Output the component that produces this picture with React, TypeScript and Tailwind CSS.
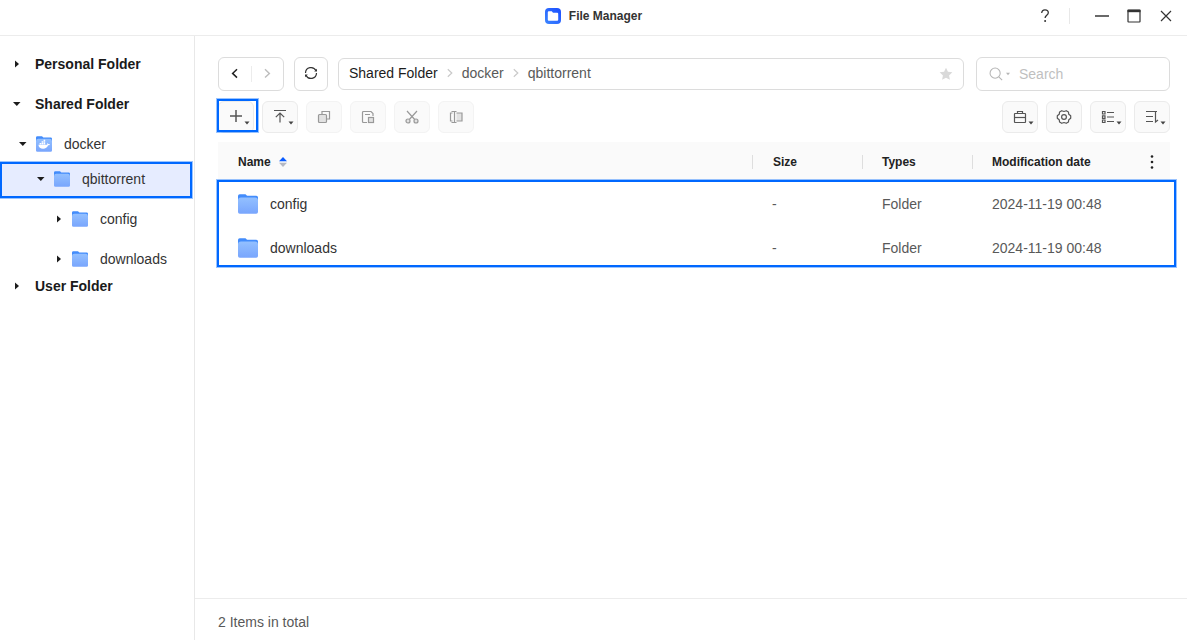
import type { ReactNode } from "react";

type TreeItem = {
  label: string;
  indent: string;
  open?: boolean;
  icon?: "docker" | "folder";
  row?: string;
};

const tree: TreeItem[] = [
  { label: "Personal Folder", indent: "pl-3", row: "h-10" },
  { label: "Shared Folder", indent: "pl-3", row: "h-10", open: true },
  { label: "docker", indent: "pl-[18px]", row: "h-10", open: true, icon: "docker" },
  {
    label: "qbittorrent",
    indent: "pl-[34px]",
    row: "h-9 -mt-0.5 mb-px mr-0.5 pb-0.5 bg-[#e6ecff] border-2 border-[#0068ff] ring-1 ring-[#0068ff]/40",
    open: true,
    icon: "folder",
  },
  { label: "config", indent: "pl-[54px]", row: "h-10", icon: "folder" },
  { label: "downloads", indent: "pl-[54px]", row: "h-10", icon: "folder" },
  { label: "User Folder", indent: "pl-3", row: "h-3.5" },
];

const files = [
  { name: "config", size: "-", type: "Folder", date: "2024-11-19 00:48" },
  { name: "downloads", size: "-", type: "Folder", date: "2024-11-19 00:48" },
];

function FolderIcon({ className, docker }: { className: string; docker?: boolean }) {
  return (
    <svg viewBox="0 0 20 20" className={className} aria-hidden="true">
      <defs>
        <linearGradient id="folder-front" x1="0" y1="0" x2="0" y2="1">
          <stop offset="0" stopColor="#93c0ff" />
          <stop offset="1" stopColor="#78a5fd" />
        </linearGradient>
      </defs>
      <path d="M0 2A1.700 1.700 0 0 1 1.700.3h5.600c.8 0 1.200 1.500 2 1.500h9A1.700 1.700 0 0 1 20 3.500V10H0z" fill="#438cfb" />
      <path d="M0 6.500a3 3 0 0 1 3-3h14a3 3 0 0 1 3 3V18a1.800 1.800 0 0 1-1.800 1.800H1.800A1.800 1.800 0 0 1 0 18z" fill="url(#folder-front)" />
      {docker && (
        <g fill="#fff">
          <path d="M3 11h10.800c.6-.8.4-1.800 0-2.400.9.100 1.500.7 1.600 1.500.7-.2 1.500 0 2 .4-.5.800-1.300 1.200-2.300 1.200-1 2.800-3.200 4.300-6.200 4.300C5.500 16 3.300 14.400 3 11z" />
          <path d="M4.500 8.800h2v1.700h-2zM7 8.800h2v1.700H7zM9.500 8.800h2v1.700h-2zM7 6.700h2v1.600H7zM9.500 6.700h2v1.600h-2zM9.500 4.800h2v1.400h-2z" />
        </g>
      )}
    </svg>
  );
}

function Caret({ open }: { open?: boolean }) {
  return (
    <svg viewBox="0 0 10 10" className="w-2.5 h-2.5 shrink-0" fill="#1c1c1c" aria-hidden="true">
      {open ? <path d="M1 3h7.500L4.800 7z" /> : <path d="M3 1.500v7l4-3.500z" />}
    </svg>
  );
}

function Icon({ children, className = "w-4 h-4" }: { children: ReactNode; className?: string }) {
  return (
    <svg viewBox="0 0 16 16" className={className} fill="none" stroke="currentColor" aria-hidden="true">
      {children}
    </svg>
  );
}

function ToolButton({
  label,
  children,
  menu,
  disabled,
  marked,
}: {
  label: string;
  children: ReactNode;
  menu?: boolean;
  disabled?: boolean;
  marked?: boolean;
}) {
  return (
    <button
      type="button"
      aria-label={label}
      disabled={disabled}
      className={`relative flex items-center justify-center w-9 h-8 rounded-md border bg-[#fafafa] ${
        disabled ? "border-[#f3f3f3] text-[#999]" : "border-[#ebebeb] text-[#555]"
      }`}
    >
      {children}
      {menu && (
        <svg viewBox="0 0 6 4" className="absolute right-[3px] bottom-[7px] w-1.5 h-1" fill="#444" aria-hidden="true">
          <path d="M.5.5h5L3 3.500z" />
        </svg>
      )}
      {marked && (
        <span className="absolute -left-0.5 -right-[5px] -top-[3px] bottom-0 border-2 border-[#0068ff] ring-1 ring-[#0068ff]/40" />
      )}
    </button>
  );
}

function Crumb() {
  return (
    <svg viewBox="0 0 6 10" className="w-1.5 h-2.5 mx-[9px]" fill="none" stroke="#c9c9c9" aria-hidden="true">
      <path d="M.8 1.300L4.800 5l-4 3.700" strokeWidth="1.200" />
    </svg>
  );
}

export default function App() {
  return (
    <div className="flex flex-col min-h-screen bg-white text-sm text-[#333] font-['Liberation_Sans',Arial,sans-serif]">
      <header className="relative flex items-center justify-center h-9 pb-1 border-b border-[#ececec]">
        <svg viewBox="0 0 16 16" className="w-4 h-4 mr-2" aria-hidden="true">
          <defs>
            <linearGradient id="app-logo" x1="1" y1="0" x2="0" y2="1">
              <stop offset="0" stopColor="#1b4dff" />
              <stop offset="1" stopColor="#3c86ff" />
            </linearGradient>
          </defs>
          <rect width="16" height="16" rx="4" fill="url(#app-logo)" />
          <path d="M2.800 4.300a1 1 0 0 1 1-1h3L8 4.800h4.200a1 1 0 0 1 1 1v6a1 1 0 0 1-1 1H3.800a1 1 0 0 1-1-1z" fill="#fff" />
        </svg>
        <h1 className="text-xs font-bold text-[#333]">File Manager</h1>
        <div className="absolute right-[5px] top-0 flex items-center h-8 text-[#333]">
          <button type="button" aria-label="Help" className="flex items-center justify-center w-8 h-8">
            <Icon>
              <path d="M4.700 5c.1-2 1.400-3.200 3.300-3.200S11.300 3 11.300 4.800c0 2.400-3.200 2.600-3.200 5.200" strokeWidth="1.300" />
              <circle cx="8.100" cy="13" r="1" fill="currentColor" stroke="none" />
            </Icon>
          </button>
          <span className="w-px h-4 ml-2 mr-4 bg-[#e8e8e8]" />
          <button type="button" aria-label="Minimize" className="flex items-center justify-center w-8 h-8">
            <Icon>
              <path d="M1 8h14" strokeWidth="1.600" stroke="#444" />
            </Icon>
          </button>
          <button type="button" aria-label="Maximize" className="flex items-center justify-center w-8 h-8">
            <Icon>
              <rect x="2" y="2" width="12" height="12" rx=".5" strokeWidth="1.200" />
              <path d="M1.500 3h13" strokeWidth="2.400" />
            </Icon>
          </button>
          <button type="button" aria-label="Close" className="flex items-center justify-center w-8 h-8">
            <Icon>
              <path d="M3 3l10 10M13 3L3 13" strokeWidth="1.200" />
            </Icon>
          </button>
        </div>
      </header>

      <div className="flex flex-1">
        <nav className="w-[195px] shrink-0 pt-2 border-r border-[#e8e8e8]">
          {tree.map((item) => (
            <div key={item.label} className={`flex items-center ${item.row} ${item.indent}`}>
              <button
                type="button"
                className={`flex items-center ${item.icon ? "gap-2" : "gap-[13px] font-bold text-[#1a1a1a]"}`}
              >
                <Caret open={item.open} />
                {item.icon && <FolderIcon className="w-4 h-4 mr-1" docker={item.icon === "docker"} />}
                {item.label}
              </button>
            </div>
          ))}
        </nav>

        <div className="flex flex-col flex-1 min-w-0">
          <main className="flex-1 pt-[21px] pl-[23px] pr-[17px]">
            {/* Navigation */}
            <div className="flex items-center">
              <div className="flex items-center w-[66px] h-[34px] mr-2.5 rounded-md border border-[#dcdcdc]">
                <button type="button" aria-label="Back" className="flex flex-1 items-center justify-center h-full">
                  <Icon>
                    <path d="M10 3.200L5.600 7.400l4.400 4.200" strokeWidth="1.500" stroke="#222" />
                  </Icon>
                </button>
                <span className="w-px h-4 bg-[#ececec]" />
                <button type="button" aria-label="Forward" className="flex flex-1 items-center justify-center h-full">
                  <Icon>
                    <path d="M6 3.200l4.400 4.200L6 11.600" strokeWidth="1.400" stroke="#bdbdbd" />
                  </Icon>
                </button>
              </div>
              <button
                type="button"
                aria-label="Refresh"
                className="flex items-center justify-center w-[34px] h-[34px] mr-2.5 pb-0.5 rounded-md border border-[#dcdcdc] text-[#333]"
              >
                <Icon>
                  <path d="M2.500 8A5.500 5.500 0 0 1 13 5.800M13.500 8A5.500 5.500 0 0 1 3 10.200" strokeWidth="1.200" />
                  <path d="M11.200 6.500h2.800V3.800zM4.800 9.500H2v2.700z" fill="currentColor" stroke="none" />
                </Icon>
              </button>
              <div className="flex flex-1 items-center h-8 px-2.5 pb-0.5 mr-3 rounded-md border border-[#dcdcdc]">
                <a href="#shared" className="text-[#1c1c1c]">Shared Folder</a>
                <Crumb />
                <a href="#docker" className="text-[#595959]">docker</a>
                <Crumb />
                <a href="#qbittorrent" className="text-[#595959]">qbittorrent</a>
                <button type="button" aria-label="Favorite" className="ml-auto pt-0.5">
                  <svg viewBox="0 0 16 16" className="block w-3.5 h-3.5" fill="#d9d9d9" aria-hidden="true">
                    <path d="M8 .8l2.200 4.700 5.100.6-3.800 3.500 1 5.100L8 12.200l-4.500 2.500 1-5.100L.7 6.100l5.100-.6z" />
                  </svg>
                </button>
              </div>
              <div className="flex items-center w-[194px] h-[34px] px-3 rounded-md border border-[#dcdcdc] text-[#b5b5b5]">
                <Icon className="w-3.5 h-3.5 shrink-0">
                  <circle cx="7" cy="7" r="5.800" strokeWidth="1.200" />
                  <path d="M11.200 11.200L15 15" strokeWidth="1.200" />
                </Icon>
                <svg viewBox="0 0 6 4" className="w-1.5 h-1 shrink-0 mx-0.5" fill="#b5b5b5" aria-hidden="true">
                  <path d="M1 .8h4L3 3.200z" />
                </svg>
                <input
                  type="text"
                  aria-label="Search"
                  placeholder="Search"
                  className="w-full min-w-0 pl-1.5 text-[#333] placeholder:text-[#bfbfbf] outline-none"
                />
              </div>
            </div>

            {/* Toolbar */}
            <div className="flex gap-2 mt-2.5">
              <ToolButton label="New" menu marked>
                <Icon>
                  <path d="M2 7h12M8 1v12" strokeWidth="1.500" />
                </Icon>
              </ToolButton>
              <ToolButton label="Upload" menu>
                <Icon>
                  <path d="M2 1.500h12M8 13.500V4M3.800 8.200L8 4l4.200 4.200" strokeWidth="1.200" />
                </Icon>
              </ToolButton>
              <ToolButton label="Copy" disabled>
                <Icon>
                  <path d="M6 5V2.500h7.500v7.500H11" strokeWidth="1.200" />
                  <rect x="2.500" y="5.500" width="8" height="8" rx="1" fill="#e2e2e2" strokeWidth="1.200" />
                </Icon>
              </ToolButton>
              <ToolButton label="Paste" disabled>
                <Icon>
                  <path d="M7 13.500H3.500a1 1 0 0 1-1-1v-9a1 1 0 0 1 1-1h7.500l2 2v2.500M5 5.500h5" strokeWidth="1.200" />
                  <rect x="8.500" y="8.500" width="5" height="5" fill="#e2e2e2" strokeWidth="1.200" />
                </Icon>
              </ToolButton>
              <ToolButton label="Cut" disabled>
                <Icon>
                  <path d="M3 2l7.700 8.500M13 2l-7.700 8.500" strokeWidth="1.200" />
                  <circle cx="4" cy="12" r="2" fill="#e2e2e2" strokeWidth="1.200" />
                  <circle cx="12" cy="12" r="2" fill="#e2e2e2" strokeWidth="1.200" />
                </Icon>
              </ToolButton>
              <ToolButton label="Rename" disabled>
                <Icon>
                  <path d="M8.500 4h5.500v8H8.500" fill="#e2e2e2" strokeWidth="1.200" />
                  <path d="M4.500 4h-2v8h2M6.500 2.500v11M3.500 2.500h5M3.500 13.500h5" strokeWidth="1.200" />
                </Icon>
              </ToolButton>
              <div className="flex gap-2 ml-auto">
                <ToolButton label="Tools" menu>
                  <Icon>
                    <path d="M5.500 4.500v-2h5v2" strokeWidth="1.200" />
                    <rect x="2.500" y="4.500" width="11" height="9" rx=".5" strokeWidth="1.200" />
                    <path d="M2.500 8.500h11" strokeWidth="1.200" />
                  </Icon>
                </ToolButton>
                <ToolButton label="Settings">
                  <Icon>
                    <path
                      d="M14.700 6.800v2.400l-1.900 1.500-.4 2.400-2.100 1.200L8 13.500l-2.300.8-2.100-1.200-.4-2.400-1.900-1.500V6.800l1.900-1.500.4-2.400 2.100-1.200L8 2.500l2.300-.8 2.100 1.200.4 2.400z"
                      strokeLinejoin="round"
                      strokeWidth="1.200"
                    />
                    <circle cx="8" cy="8" r="2.400" strokeWidth="1.200" />
                  </Icon>
                </ToolButton>
                <ToolButton label="View" menu>
                  <Icon>
                    <path d="M2.500 2.500H5V5H2.500zM2.500 6.800H5v2.500H2.500zM2.500 11H5v2.500H2.500zM7 3.500h7M7 8h7M7 12.500h7" strokeWidth="1.200" />
                  </Icon>
                </ToolButton>
                <ToolButton label="Sort" menu>
                  <Icon>
                    <path d="M2 2.500h11M2 7.500h7M2 12.500h7M11.500 2.500V13l2.500-2" strokeWidth="1.200" />
                  </Icon>
                </ToolButton>
              </div>
            </div>

            {/* File list */}
            <div className="relative mt-[9px]">
              <table className="w-full table-fixed text-left text-[#595959]">
                <colgroup>
                  <col />
                  <col className="w-[110px]" />
                  <col className="w-[110px]" />
                  <col className="w-[198px]" />
                </colgroup>
                <thead className="bg-[#fafafa] text-xs text-[#222]">
                  <tr className="h-10">
                    <th className="p-0 pl-5">
                      <button type="button" className="flex items-center gap-2 font-bold">
                        Name
                        <svg viewBox="0 0 8 10" className="w-2 h-2.5" aria-hidden="true">
                          <path d="M0 4.300L4 0l4 4.300z" fill="#0a5cff" />
                          <path d="M0 5.700h8L4 10z" fill="#b5b9c4" />
                        </svg>
                      </button>
                    </th>
                    <th className="p-0">
                      <span className="block pl-5 border-l border-[#dedede] leading-3.5">Size</span>
                    </th>
                    <th className="p-0">
                      <span className="block pl-[19px] border-l border-[#dedede] leading-3.5">Types</span>
                    </th>
                    <th className="p-0">
                      <span className="flex items-center justify-between pl-[19px] pr-4 border-l border-[#dedede] leading-3.5">
                        Modification date
                        <button type="button" aria-label="Columns">
                          <svg viewBox="0 0 4 14" className="block w-1 h-3.5" fill="#222" aria-hidden="true">
                            <circle cx="2" cy="1.500" r="1.300" />
                            <circle cx="2" cy="7" r="1.300" />
                            <circle cx="2" cy="12.500" r="1.300" />
                          </svg>
                        </button>
                      </span>
                    </th>
                  </tr>
                </thead>
                <tbody>
                  {files.map((file) => (
                    <tr key={file.name} className="h-11">
                      <td className="p-0 pl-5 text-[#333]">
                        <span className="flex items-center gap-3">
                          <FolderIcon className="w-5 h-5" />
                          {file.name}
                        </span>
                      </td>
                      <td className="p-0 pl-5">{file.size}</td>
                      <td className="p-0 pl-5">{file.type}</td>
                      <td className="p-0 pl-5">{file.date}</td>
                    </tr>
                  ))}
                </tbody>
              </table>
              <div className="absolute top-[38px] -left-px -right-1.5 bottom-[3px] border-2 border-[#0068ff] ring-1 ring-[#0068ff]/40 pointer-events-none" />
            </div>
          </main>

          <footer className="flex items-center h-[42px] pt-1 pl-[23px] border-t border-[#ececec] text-[#595959]">
            2 Items in total
          </footer>
        </div>
      </div>
    </div>
  );
}
